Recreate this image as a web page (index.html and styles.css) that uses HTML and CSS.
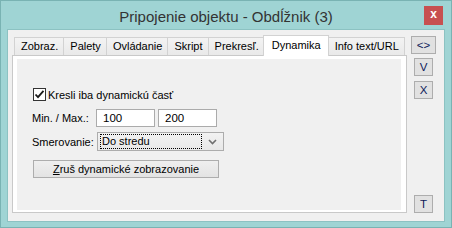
FILE: index.html
```html
<!DOCTYPE html>
<html lang="sk">
<head>
    <meta charset="UTF-8">
    <title>Pripojenie objektu - Obdĺžnik (3)</title>
    <link rel="stylesheet" href="styles.css">
</head>
<body>
    <div class="window">
        <div class="titlebar">
            <span class="title">Pripojenie objektu - Obdĺžnik (3)</span>
            <span class="close">x</span>
        </div>

        <div class="client">
            <div class="tabs-area">
                <div class="tab-strip">
                    <div class="tab">Zobraz.</div>
                    <div class="tab">Palety</div>
                    <div class="tab">Ovládanie</div>
                    <div class="tab">Skript</div>
                    <div class="tab">Prekresľ.</div>
                    <div class="tab active">Dynamika</div>
                    <div class="tab">Info text/URL</div>
                </div>

                <div class="panel">
                    <div class="panel-inner">
                        <label class="check-row">
                            <span class="checkbox">
                                <svg width="11" height="11" viewBox="0 0 11 11">
                                    <path d="M1.5 5.5 L4 8.2 L9.5 1.8" fill="none" stroke="#1a1a1a" stroke-width="1.8"/>
                                </svg>
                            </span>
                            Kresli iba dynamickú časť
                        </label>

                        <div class="row minmax">
                            <span class="row-label">Min. / Max.:</span>
                            <span class="field">100</span>
                            <span class="field">200</span>
                        </div>

                        <div class="row direction">
                            <span class="row-label">Smerovanie:</span>
                            <span class="combo">
                                <span class="combo-value">Do stredu</span>
                                <svg class="combo-arrow" width="9" height="6" viewBox="0 0 9 6">
                                    <path d="M1 1 L4.5 4.5 L8 1" fill="none" stroke="#707070" stroke-width="1.6"/>
                                </svg>
                            </span>
                        </div>

                        <div class="cancel-btn"><u>Z</u>ruš dynamické zobrazovanie</div>
                    </div>
                </div>
            </div>

            <div class="side">
                <div class="side-btn wide">&lt;&gt;</div>
                <div class="side-btn">V</div>
                <div class="side-btn">X</div>
                <div class="side-btn bottom">T</div>
            </div>
        </div>
    </div>
</body>
</html>
```

FILE: styles.css
```css
html, body {
    margin: 0;
    padding: 0;
    font-family: 'Liberation Sans', Arial, sans-serif;
    font-size: 11px;
    color: #000;
}

.window {
    width: 452px;
    height: 228px;
    box-sizing: border-box;
    background: #9fd4d4;
    border: 1px solid #79b3b3;
    display: flex;
    flex-direction: column;
}

.titlebar {
    height: 28px;
    display: flex;
    align-items: center;
    justify-content: center;
    position: relative;
}

.title {
    font-size: 15px;
    color: #333;
    margin-top: 2px;
}

.close {
    position: absolute;
    right: 8px;
    top: 5px;
    width: 19px;
    height: 19px;
    background: #c75050;
    color: #fff;
    font-weight: bold;
    font-size: 12px;
    line-height: 17px;
    text-align: center;
}

.client {
    margin: 0 6px 5px 6px;
    flex: 1;
    background: #f0f0f0;
    border: 1px solid #8cc2c2;
    display: flex;
    padding: 5px 4px 8px 4px;
}

.tabs-area {
    width: 395px;
    display: flex;
    flex-direction: column;
}

.tab-strip {
    display: flex;
    align-items: flex-end;
    height: 20px;
    padding-left: 2px;
}

.tab {
    height: 17px;
    line-height: 17px;
    padding: 0 5px 0 6px;
    background: linear-gradient(#f3f3f3, #e9e9e9);
    border: 1px solid #d2d2d2;
    border-bottom: none;
    margin-right: -1px;
    white-space: nowrap;
}

.tab.active {
    height: 20px;
    line-height: 18px;
    background: #fff;
    margin: 0 -1px -1px -1px;
    padding: 0 7px 0 8px;
    position: relative;
    z-index: 1;
}

.panel {
    flex: 1;
    border: 1px solid #c9c9c9;
    background: #fff;
    padding: 3px 5px 2px 4px;
    display: flex;
}

.panel-inner {
    flex: 1;
    background: #f0f0f0;
    padding: 29px 15px 0 15px;
}

.check-row {
    display: flex;
    align-items: center;
    height: 13px;
    gap: 2px;
    margin-left: 1px;
}

.checkbox {
    width: 11px;
    height: 11px;
    border: 1px solid #333;
    background: #fff;
    display: flex;
}

.row {
    display: flex;
    align-items: center;
}

.row-label {
    width: 64px;
}

.minmax {
    margin-top: 8px;
}

.field {
    width: 51px;
    height: 16px;
    line-height: 16px;
    padding-left: 6px;
    margin-right: 3px;
    border: 1px solid #ababab;
    background: #fff;
    font-size: 11.5px;
}

.direction {
    margin-top: 5px;
}

.combo {
    width: 121px;
    height: 17px;
    margin-left: 1px;
    border: 1px solid #acacac;
    background: linear-gradient(#f2f2f2, #e8e8e8);
    display: flex;
    align-items: center;
    padding: 0 2px;
}

.combo-value {
    flex: 1;
    height: 13px;
    line-height: 13px;
    border: 1px dotted #000;
    padding-left: 1px;
    margin-right: 6px;
}

.combo-arrow {
    margin-right: 4px;
}

.cancel-btn {
    width: 184px;
    height: 16px;
    line-height: 16px;
    margin: 9px 0 0 1px;
    text-align: center;
    border: 1px solid #adadad;
    background: linear-gradient(#efefef, #e3e3e3);
}

.side {
    flex: 1;
    display: flex;
    flex-direction: column;
    align-items: center;
    padding-top: 1px;
}

.side-btn {
    width: 17px;
    height: 16px;
    line-height: 16px;
    margin-bottom: 5px;
    text-align: center;
    font-size: 11.5px;
    color: #0c1a5a;
    border: 1px solid #adadad;
    background: #e1e1e1;
}

.side-btn.wide {
    width: 23px;
    margin-bottom: 4px;
}

.side-btn.bottom {
    margin-top: auto;
    margin-bottom: 0;
}
```
